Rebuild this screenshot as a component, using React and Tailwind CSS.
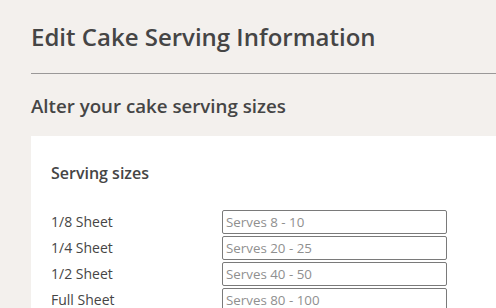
import React from "react";

const rows = [
  ["1/8 Sheet", "Serves 8 - 10"],
  ["1/4 Sheet", "Serves 20 - 25"],
  ["1/2 Sheet", "Serves 40 - 50"],
  ["Full Sheet", "Serves 80 - 100"],
];

export default function App() {
  return (
    <div
      className="min-h-screen bg-[#f3f0ed] pl-[31px] pt-[21px] text-[#454545] overflow-hidden"
      style={{ fontFamily: '"Open Sans", sans-serif' }}
    >
      <h1 className="text-[24px] leading-[32px] font-semibold">Edit Cake Serving Information</h1>
      <div className="mt-[20px] border-t border-[#9a9898]" />
      <h2 className="mt-[18px] text-[18.72px] leading-[28px] font-semibold">Alter your cake serving sizes</h2>
      <div className="mt-[16px] bg-white pl-[20px] pt-[25px] pb-[20px]">
        <h3 className="text-[16px] leading-[24px] font-semibold">Serving sizes</h3>
        <div className="mt-[25px] flex flex-col gap-[2px]">
          {rows.map(([label, ph]) => (
            <div key={label} className="flex items-center h-[24px]">
              <div className="w-[171px] text-[14px] leading-[20px]">{label}</div>
              <input
                className="w-[225px] h-[24px] border border-[#7a7a7a] rounded-[2px] px-[3px] text-[13.333px] placeholder:text-[#8f8f8f] outline-none"
                placeholder={ph}
                style={{ fontFamily: '"Open Sans", sans-serif' }}
              />
            </div>
          ))}
        </div>
      </div>
    </div>
  );
}
